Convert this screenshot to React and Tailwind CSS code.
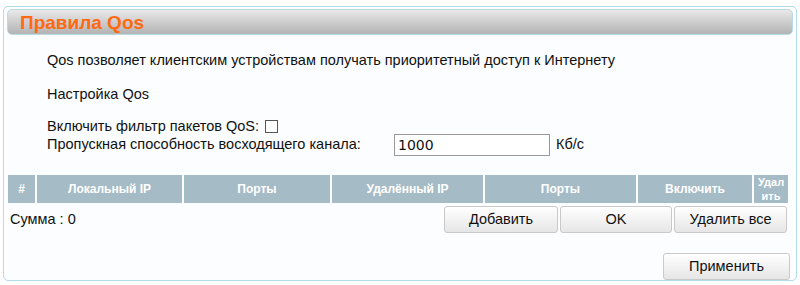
import React from 'react'

const cols = [
	{ label: '#', w: 'w-[27px]' },
	{ label: 'Локальный IP', w: 'w-[145px]' },
	{ label: 'Порты', w: 'w-[146px]' },
	{ label: 'Удалённый IP', w: 'w-[151px]' },
	{ label: 'Порты', w: 'w-[151px]' },
	{ label: 'Включить', w: 'w-[114px]' },
]

function Btn({ children, className = '' }) {
	return (
		<button className={`h-[27px] rounded-[3px] border border-[#c9c9c9] bg-gradient-to-b from-white to-[#e6e6e6] text-[14.5px] text-[#111] ${className}`}>
			{children}
		</button>
	)
}

export default function App() {
	return (
		<div className="w-[800px] h-[285px] bg-white pt-[6px] px-[3px] font-['Liberation_Sans',Arial,sans-serif]">
			<div className="h-[275px] rounded-[5px] border border-[#b3dcec] bg-[#fbfdfe] px-[3px] pt-[2px] flex flex-col">
				<div className="h-[29px] rounded-[5px] border border-[#bcd9e6] bg-gradient-to-b from-[#e9e9e9] to-[#b3b3b3] flex items-center pl-[12px]">
					<span className="text-[19px] font-bold text-[#ff6a10] leading-none">Правила Qos</span>
				</div>

				<div className="pl-[40px] text-[14.5px] text-[#111] leading-none">
					<p className="mt-[18px]">Qos позволяет клиентским устройствам получать приоритетный доступ к Интернету</p>
					<p className="mt-[19px]">Настройка Qos</p>
					<div className="mt-[18px] flex items-center">
						<span>Включить фильтр пакетов QoS:</span>
						<span className="ml-[6px] w-[13px] h-[13px] border border-[#555] bg-white inline-block"></span>
					</div>
					<div className="flex items-center mt-[0px]">
						<span className="w-[347px]">Пропускная способность восходящего канала:</span>
						<div className="w-[156px] h-[22px] border border-[#999] bg-white flex items-center pl-[3px] font-['DejaVu_Sans',sans-serif] text-[14px]">1000</div>
						<span className="ml-[6px]">Кб/с</span>
					</div>
				</div>

				<div className="mt-[19px] ml-[1px] flex gap-[2px] h-[32px]">
					{cols.map((c, i) => (
						<div key={i} className={`${c.w} bg-[#a5bbc6] flex items-center justify-center text-white text-[12px] font-bold`}>{c.label}</div>
					))}
					<div className="w-[34px] bg-[#a5bbc6] flex items-center justify-center text-center text-white text-[11px] font-bold leading-[14px]">Удал<br />ить</div>
				</div>

				<div className="flex items-center mt-[3px]">
					<span className="ml-[3px] text-[14.5px] text-[#111]">Сумма : 0</span>
					<div className="ml-auto mr-[6px] flex gap-[2px]">
						<Btn className="w-[114px]">Добавить</Btn>
						<Btn className="w-[112px]">OK</Btn>
						<Btn className="w-[113px]">Удалить все</Btn>
					</div>
				</div>

				<div className="flex justify-end mt-[20px] mr-[3px]">
					<Btn className="w-[127px] h-[24px]">Применить</Btn>
				</div>
			</div>
		</div>
	)
}
